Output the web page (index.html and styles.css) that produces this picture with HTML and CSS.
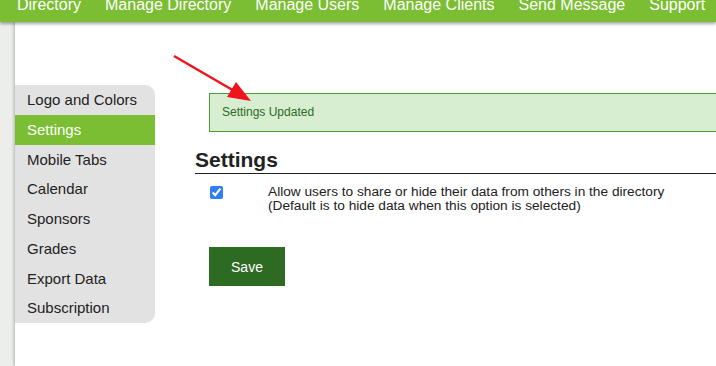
FILE: index.html
```html
<!DOCTYPE html>
<html lang="en">
<head>
    <meta charset="UTF-8">
    <meta name="viewport" content="width=device-width, initial-scale=1.0">
    <title>Settings</title>
    <link rel="stylesheet" href="styles.css">
</head>
<body>
    <div class="topnav">
        <ul>
            <li><a href="#">Directory</a></li>
            <li><a href="#">Manage Directory</a></li>
            <li><a href="#">Manage Users</a></li>
            <li><a href="#">Manage Clients</a></li>
            <li><a href="#">Send Message</a></li>
            <li><a href="#">Support</a></li>
        </ul>
    </div>

    <div class="page">
        <ul class="sidebar">
            <li><a href="#">Logo and Colors</a></li>
            <li class="active"><a href="#">Settings</a></li>
            <li><a href="#">Mobile Tabs</a></li>
            <li><a href="#">Calendar</a></li>
            <li><a href="#">Sponsors</a></li>
            <li><a href="#">Grades</a></li>
            <li><a href="#">Export Data</a></li>
            <li><a href="#">Subscription</a></li>
        </ul>

        <div class="main">
            <div class="alert">Settings Updated</div>

            <h2>Settings</h2>

            <div class="option">
                <input type="checkbox" id="share" checked>
                <label for="share">Allow users to share or hide their data from others in the directory<br>(Default is to hide data when this option is selected)</label>
            </div>

            <button class="save-button">Save</button>
        </div>
    </div>

    <!-- annotation arrow drawn over the page -->
    <svg class="arrow" width="716" height="366" viewBox="0 0 716 366">
        <line x1="174" y1="56" x2="236" y2="92" stroke="#f0141a" stroke-width="2.5"/>
        <polygon points="251,101 227,97 236,82" fill="#f0141a"/>
    </svg>
</body>
</html>
```

FILE: styles.css
```css
html, body {
    overflow: hidden;
}
body {
    margin: 0;
    background-color: #eceeec;
    font-family: "Liberation Sans", Arial, sans-serif;
    color: #222;
}
a {
    text-decoration: none;
    color: inherit;
}

.topnav {
    position: relative;
    z-index: 2;
    height: 22px;
    overflow: hidden;
    background-color: #7bbd33;
    box-shadow: 0 2px 3px rgba(0, 0, 0, 0.35);
}
.topnav ul {
    display: flex;
    list-style: none;
    margin: -3px 0 0 0;
    padding: 0 0 0 5px;
    white-space: nowrap;
}
.topnav a {
    display: block;
    padding: 0 12px;
    font-size: 16px;
    line-height: 16px;
    color: #fff;
}

.page {
    display: flex;
    align-items: flex-start;
    margin-left: 15px;
    min-height: 344px;
    padding-top: 63px;
    box-sizing: border-box;
    background-color: #fff;
    box-shadow: -1px 0 3px rgba(0, 0, 0, 0.25);
}

.sidebar {
    flex: none;
    width: 140px;
    list-style: none;
    margin: 0;
    padding: 0;
    background-color: #e2e2e2;
    border-radius: 0 10px 10px 0;
}
.sidebar a {
    display: block;
    padding-left: 12px;
    font-size: 15px;
    line-height: 29.75px;
    color: #222;
}
.sidebar .active a {
    background-color: #7bbd33;
    color: #fff;
}

.main {
    flex: 1;
    padding-left: 40px;
    margin-top: 8px;
}

.alert {
    width: 560px;
    height: 37px;
    margin-left: 14px;
    padding-left: 12px;
    border: 1px solid #4e9a35;
    background-color: #d8eed0;
    color: #2d6a28;
    font-size: 12px;
    line-height: 37px;
}

h2 {
    margin: 16px 0 0;
    padding-bottom: 1px;
    font-size: 21px;
    line-height: 24px;
    border-bottom: 1px solid #222;
}

.option {
    display: flex;
    align-items: flex-start;
    margin-top: 11px;
    font-size: 13.7px;
    line-height: 14px;
}
.option input {
    width: 13px;
    height: 13px;
    margin: 1px 45px 0 15px;
    accent-color: #2f7ef6;
}

.save-button {
    display: block;
    width: 76px;
    height: 39px;
    margin: 34px 0 0 14px;
    border: none;
    border-radius: 0;
    background-color: #2e6b22;
    color: #fff;
    font-family: "Liberation Sans", Arial, sans-serif;
    font-size: 14px;
}

.arrow {
    position: absolute;
    top: 0;
    left: 0;
    pointer-events: none;
}
```
